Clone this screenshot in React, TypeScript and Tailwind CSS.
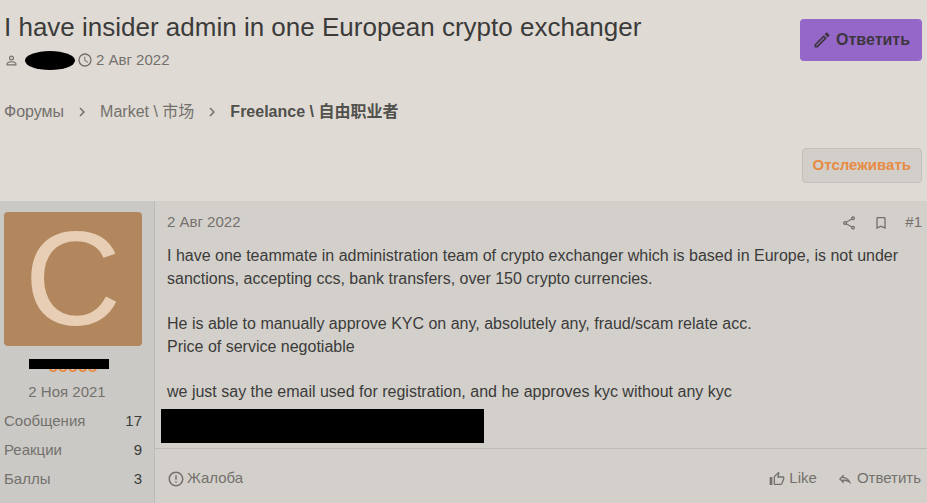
import React from "react";

const paths = {
  account:
    "M12,13C9.33,13 4,14.33 4,17V20H20V17C20,14.33 14.67,13 12,13M12,4A4,4 0 0,0 8,8A4,4 0 0,0 12,12A4,4 0 0,0 16,8A4,4 0 0,0 12,4M12,14.9C14.97,14.9 18.1,16.36 18.1,17V18.1H5.9V17C5.9,16.36 9,14.9 12,14.9M12,5.9A2.1,2.1 0 0,1 14.1,8A2.1,2.1 0 0,1 12,10.1A2.1,2.1 0 0,1 9.9,8A2.1,2.1 0 0,1 12,5.9Z",
  clock:
    "M12,20A8,8 0 0,0 20,12A8,8 0 0,0 12,4A8,8 0 0,0 4,12A8,8 0 0,0 12,20M12,2A10,10 0 0,1 22,12A10,10 0 0,1 12,22C6.47,22 2,17.5 2,12A10,10 0 0,1 12,2M12.5,7V12.25L17,14.92L16.25,16.15L11,13V7H12.5Z",
  pencil:
    "M14.06,9L15,9.94L5.92,19H5V18.08L14.06,9M17.66,3C17.41,3 17.15,3.1 16.96,3.29L15.13,5.12L18.88,8.87L20.71,7.04C21.1,6.65 21.1,6 20.71,5.63L18.37,3.29C18.17,3.09 17.92,3 17.66,3M14.06,6.19L3,17.25V21H6.75L17.81,9.94L14.06,6.19Z",
  chevron: "M8.59,16.58L13.17,12L8.59,7.41L10,6L16,12L10,18L8.59,16.58Z",
  share:
    "M18,16.08C17.24,16.08 16.56,16.38 16.04,16.85L8.91,12.7C8.96,12.47 9,12.24 9,12C9,11.76 8.96,11.53 8.91,11.3L15.96,7.19C16.5,7.69 17.21,8 18,8A3,3 0 0,0 21,5A3,3 0 0,0 18,2A3,3 0 0,0 15,5C15,5.24 15.04,5.47 15.09,5.7L8.04,9.81C7.5,9.31 6.79,9 6,9A3,3 0 0,0 3,12A3,3 0 0,0 6,15C6.79,15 7.5,14.69 8.04,14.19L15.16,18.34C15.11,18.55 15.08,18.77 15.08,19C15.08,20.61 16.39,21.91 18,21.91C19.61,21.91 20.92,20.61 20.92,19A2.92,2.92 0 0,0 18,16.08M18,4A1,1 0 0,1 19,5A1,1 0 0,1 18,6A1,1 0 0,1 17,5A1,1 0 0,1 18,4M6,13A1,1 0 0,1 5,12A1,1 0 0,1 6,11A1,1 0 0,1 7,12A1,1 0 0,1 6,13M18,20A1,1 0 0,1 17,19A1,1 0 0,1 18,18A1,1 0 0,1 19,19A1,1 0 0,1 18,20Z",
  bookmark:
    "M17,18L12,15.82L7,18V5H17M17,3H7A2,2 0 0,0 5,5V21L12,18L19,21V5C19,3.89 18.1,3 17,3Z",
  alert:
    "M11,15H13V17H11V15M11,7H13V13H11V7M12,2C6.47,2 2,6.5 2,12A10,10 0 0,0 12,22A10,10 0 0,0 22,12A10,10 0 0,0 12,2M12,20A8,8 0 0,1 4,12A8,8 0 0,1 12,4A8,8 0 0,1 20,12A8,8 0 0,1 12,20Z",
  like: "M5,9V21H1V9H5M9,21A2,2 0 0,1 7,19V9C7,8.45 7.22,7.95 7.59,7.59L14.17,1L15.23,2.06C15.5,2.33 15.67,2.7 15.67,3.11L15.64,3.43L14.69,8H21C22.11,8 23,8.9 23,10V12C23,12.26 22.95,12.5 22.86,12.73L19.84,19.78C19.54,20.5 18.83,21 18,21H9M9,19H18.03L21,12V10H12.21L13.34,4.68L9,9.03V19Z",
  reply:
    "M8,9.8V10.7L9.7,11C12.3,11.4 14.2,12.4 15.6,13.7C13.9,13.2 12.1,12.9 10,12.9H8V14.2L5.8,12L8,9.8M10,5L3,12L10,19V14.9C15,14.9 18.5,16.5 21,20C20,15 17,10 10,9V5Z",
};

function Icon({ name, className }: { name: keyof typeof paths; className: string }) {
  return (
    <svg viewBox="0 0 24 24" fill="currentColor" fillRule="evenodd" aria-hidden="true" className={`shrink-0 ${className}`}>
      <path d={paths[name]} />
    </svg>
  );
}

const stats = [
  ["Сообщения", "17"],
  ["Реакции", "9"],
  ["Баллы", "3"],
];

export default function App() {
  return (
    <div className="min-h-screen flex flex-col bg-[#dfdad4] font-['Liberation_Sans','Noto_Sans_CJK_SC',sans-serif] text-[15px] text-[#3b3b3a]">
      <header className="pl-1 pr-[5px] pt-3">
        <div className="flex items-start justify-between">
          <div>
            <h1 className="text-[26px] leading-[30px]">I have insider admin in one European crypto exchanger</h1>
            <div className="mt-2 flex h-5 items-center text-[15px] text-[#74716d]">
              <Icon name="account" className="size-[15px]" />
              <span className="ml-[6px] h-[19px] w-[50px] rounded-[50%] bg-black" />
              <Icon name="clock" className="ml-[2px] mr-[3px] size-4" />
              <time>2 Авг 2022</time>
            </div>
          </div>
          <button className="mt-[7px] flex h-[42px] items-center gap-1 rounded bg-[#9567c8] px-3 text-base font-bold text-[#3e363f]">
            <Icon name="pencil" className="size-5" />
            Ответить
          </button>
        </div>
        <nav className="mt-8 flex h-5 items-center text-base text-[#74716d]">
          <a href="#forums">Форумы</a>
          <Icon name="chevron" className="mx-[9px] size-[18px]" />
          <a href="#market">Market \ 市场</a>
          <Icon name="chevron" className="mx-[9px] size-[18px]" />
          <a href="#freelance" className="font-bold text-[#50504c]">Freelance \ 自由职业者</a>
        </nav>
        <div className="mt-[26px] mb-[18px] flex justify-end">
          <button className="h-[35px] rounded border border-[#c2c0bd] bg-[#d2cfca] px-[10px] text-[15px] font-bold text-[#e88b43]">
            Отслеживать
          </button>
        </div>
      </header>

      <article className="flex flex-1 bg-[#d3d0cb]">
        <aside className="w-[155px] shrink-0 border-r border-[#bdbbb8] bg-[#cac9c5] pt-[11px] pr-3 pl-1">
          <div className="flex h-[134px] items-center justify-center rounded bg-[#b2875d] text-[134px] leading-none text-[#e7ceb5]">
            C
          </div>
          <div className="relative mt-[9px] flex h-[18px] items-center justify-center text-base font-bold text-[#e88b43]">
            <span aria-hidden="true" className="pt-[5px]">ooooo</span>
            <span className="absolute top-1 left-[25px] h-[10px] w-20 bg-black" />
          </div>
          <p className="mt-[9px] mr-3 text-center text-[15px] leading-5 text-[#74716d]">2 Ноя 2021</p>
          <dl className="mt-[9px] flex flex-col gap-[9px] text-[15px] leading-5">
            {stats.map(([label, value]) => (
              <div key={label} className="flex justify-between">
                <dt className="text-[#74716d]">{label}</dt>
                <dd>{value}</dd>
              </div>
            ))}
          </dl>
        </aside>

        <div className="min-w-0 flex-1">
          <div className="flex h-[43px] items-center pr-[5px] pl-3 text-[15px] text-[#74716d]">
            <time className="mr-auto">2 Авг 2022</time>
            <button aria-label="Share"><Icon name="share" className="size-4" /></button>
            <button aria-label="Bookmark" className="mr-4 ml-4"><Icon name="bookmark" className="size-4" /></button>
            <a href="#1">#1</a>
          </div>
          <div className="pr-[5px] pl-3 text-base leading-[23px]">
            <p>I have one teammate in administration team of crypto exchanger which is based in Europe, is not under sanctions, accepting ccs, bank transfers, over 150 crypto currencies.</p>
            <p className="mt-[22px]">He is able to manually approve KYC on any, absolutely any, fraud/scam relate acc.<br />Price of service negotiable</p>
            <p className="mt-[22px]">we just say the email used for registration, and he approves kyc without any kyc</p>
          </div>
          <div className="mt-[6px] ml-[6px] h-[34px] max-w-[323px] bg-black" />
          <footer className="mt-[5px] flex h-[60px] items-center border-t border-[#bdbbb8] pr-[6px] pl-3 text-[15px] text-[#74716d]">
            <button className="mr-auto flex items-center gap-[2px]"><Icon name="alert" className="size-[18px]" />Жалоба</button>
            <button className="flex items-center gap-1"><Icon name="like" className="size-4" />Like</button>
            <button className="ml-5 flex items-center gap-1"><Icon name="reply" className="size-4" />Ответить</button>
          </footer>
        </div>
      </article>
    </div>
  );
}
